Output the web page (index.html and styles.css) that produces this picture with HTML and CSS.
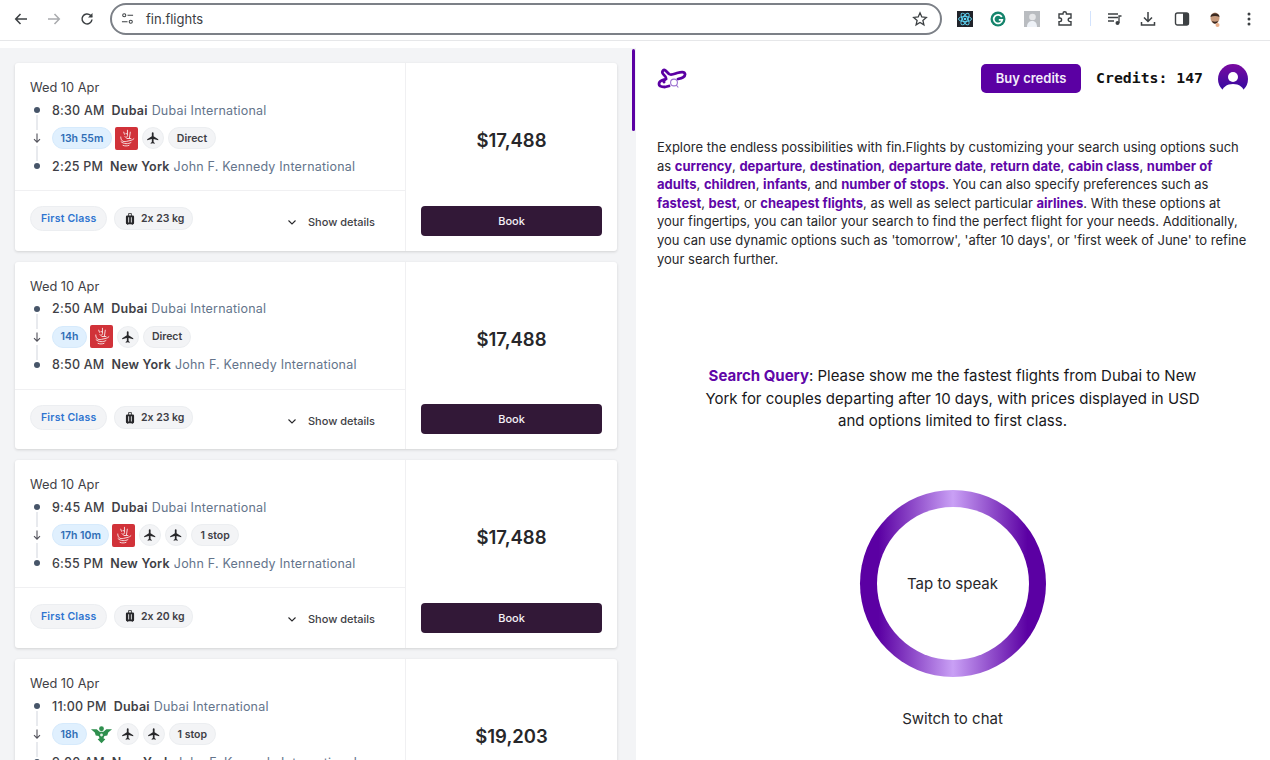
FILE: index.html
```html
<!DOCTYPE html>
<html lang="en">
<head>
  <meta charset="UTF-8">
  <title>fin.flights</title>
  <link rel="stylesheet" href="styles.css">
</head>
<body>
  <svg class="defs" width="0" height="0">
    <symbol id="plane" viewBox="0 0 24 24"><path d="M21 16v-2l-8-5V3.500c0-.83-.67-1.500-1.500-1.500S10 2.670 10 3.500V9l-8 5v2l8-2.500V19l-2 1.500V22l3.500-1 3.500 1v-1.500L13 19v-5.500l8 2.500z"/></symbol>
    <symbol id="bag" viewBox="0 0 24 24"><path d="M9 2h6v4h2a2 2 0 0 1 2 2v11a2 2 0 0 1-2 2v1h-2v-1H9v1H7v-1a2 2 0 0 1-2-2V8a2 2 0 0 1 2-2h2zm1.500 1.500V6h3V3.500zM9 9v9h1.500V9zm4.500 0v9H15V9z" fill-rule="evenodd"/></symbol>
    <symbol id="chevron" viewBox="0 0 12 12"><path d="M2.500 4.500 6 8l3.500-3.500" fill="none" stroke="currentColor" stroke-width="1.100"/></symbol>
    <symbol id="down" viewBox="0 0 12 12"><path d="M6 1.500v8.500M3 7.200 6 10.200l3-3" fill="none" stroke="currentColor" stroke-width="1.100"/></symbol>
    <symbol id="emirates" viewBox="0 0 24 24"><rect width="24" height="24" rx="2" fill="#d13239"/><path d="M13 3v6c0 2-2 2-3 1M16 5l-1 7M9 5l1 3M6 10c0 4 2 6 6 5s6-1 8-3M6 15c3 3 8 3 11 1M8 19c2 1 5 1 7 0M11 7h2M12 12h5" fill="none" stroke="#f6dfe0" stroke-width="1"/></symbol>
    <symbol id="falcon" viewBox="0 0 24 24"><path d="M1 6.500h6l3 2.500h4l3-2.500h6l-4 3.500 -1 3-3 .500-1 2.500 2 1-4 4-4-4 2-1-1-2.500-3-.500-1-3z" fill="#2f8f4e"/><circle cx="12" cy="6" r="2.500" fill="#2f8f4e"/><circle cx="12" cy="12.500" r="1.500" fill="#e3f2e7"/></symbol>
  </svg>

  <!-- Browser toolbar -->
  <header class="toolbar">
    <svg class="tool-icon first" viewBox="0 0 16 16"><path d="M14 8H3M7.500 3 2.700 8l4.800 5" fill="none" stroke="#3c4043" stroke-width="1.500"/></svg>
    <svg class="tool-icon faded" viewBox="0 0 16 16"><path d="M2 8h11M8.500 3l4.800 5-4.800 5" fill="none" stroke="#a9abae" stroke-width="1.500"/></svg>
    <svg class="tool-icon" viewBox="0 0 16 16"><path d="M13 8.500A5 5 0 1 1 11.500 4.300L13 5.800" fill="none" stroke="#3c4043" stroke-width="1.500"/><path d="M13.500 2v4.500H9z" fill="#3c4043"/></svg>
    <div class="address">
      <svg class="tune" viewBox="0 0 14 14"><circle cx="3.500" cy="3.500" r="1.700" fill="none" stroke="#3c4043" stroke-width="1.100"/><path d="M7 3.500h6M1 10.500h6" stroke="#3c4043" stroke-width="1.200"/><circle cx="10.500" cy="10.500" r="1.700" fill="none" stroke="#3c4043" stroke-width="1.100"/></svg>
      <span class="url">fin.flights</span>
      <svg class="star" viewBox="0 0 16 16"><path d="m8 1.800 1.800 4.200 4.500.4-3.400 3 1 4.400L8 11.500l-3.900 2.300 1-4.400-3.400-3 4.500-.4z" fill="none" stroke="#3c4043" stroke-width="1.300"/></svg>
    </div>
    <div class="extensions">
      <svg class="ext" viewBox="0 0 16 16"><rect width="16" height="16" fill="#20232a"/><g fill="none" stroke="#61dafb" stroke-width=".9"><ellipse cx="8" cy="8" rx="6.500" ry="2.600"/><ellipse cx="8" cy="8" rx="6.500" ry="2.600" transform="rotate(60 8 8)"/><ellipse cx="8" cy="8" rx="6.500" ry="2.600" transform="rotate(120 8 8)"/></g><circle cx="8" cy="8" r="1.300" fill="#61dafb"/></svg>
      <svg class="ext" viewBox="0 0 16 16"><circle cx="8" cy="8" r="7.500" fill="#15846c"/><path d="M11.800 6A4.300 4.300 0 1 0 12.300 8.800H8.800" fill="none" stroke="#fff" stroke-width="1.700"/></svg>
      <svg class="ext" viewBox="0 0 16 16"><rect width="16" height="16" fill="#b9bcc0"/><circle cx="8.500" cy="6" r="3.300" fill="#e6e7e9"/><path d="M3 16c0-5 3-6 5.500-6s4.500 2 4.500 6z" fill="#eef2f7"/></svg>
      <svg class="ext" viewBox="0 0 16 16"><path d="M6 3V2.500a1.700 1.700 0 0 1 3.400 0V3H14v4h-1a1.800 1.800 0 0 0 0 3.600h1V14H2v-3.400h.8a1.800 1.800 0 0 0 0-3.600H2V3z" fill="none" stroke="#3c4043" stroke-width="1.400"/></svg>
      <span class="tool-divider"></span>
      <svg class="ext" viewBox="0 0 16 16"><path d="M1 3h10M1 6.500h10M1 10h6" stroke="#3c4043" stroke-width="1.500"/><circle cx="10.500" cy="12" r="2" fill="#3c4043"/><path d="M12 12V5h2.500" fill="none" stroke="#3c4043" stroke-width="1.300"/></svg>
      <svg class="ext" viewBox="0 0 16 16"><path d="M8 1v9M4 6.500 8 10.500l4-4M1.500 11v3h13v-3" fill="none" stroke="#3c4043" stroke-width="1.500"/></svg>
      <svg class="ext" viewBox="0 0 16 16"><rect x="1.500" y="2" width="13" height="12" rx="2" fill="none" stroke="#3c4043" stroke-width="1.400"/><path d="M9 2h4a1.500 1.500 0 0 1 1.500 1.500v9A1.500 1.500 0 0 1 13 14H9z" fill="#3c4043"/></svg>
      <svg class="ext" viewBox="0 0 16 16"><ellipse cx="8" cy="7" rx="4.500" ry="5.500" fill="#c79a7c"/><path d="M3.500 6C3.500 1 12.500 1 12.500 6 10 4.500 6 4.500 3.500 6zM5 10c1 3.500 5 3.500 6 0-2 1-4 1-6 0z" fill="#3b2a22"/><circle cx="10.500" cy="14" r="2" fill="#eab08c"/></svg>
      <svg class="ext" viewBox="0 0 16 16"><circle cx="8" cy="3" r="1.500" fill="#3c4043"/><circle cx="8" cy="8" r="1.500" fill="#3c4043"/><circle cx="8" cy="13" r="1.500" fill="#3c4043"/></svg>
    </div>
  </header>

  <main class="app">
    <!-- Flight results -->
    <section class="results">
      <div class="results-list">

        <article class="card">
          <div class="card-main">
            <div class="trip">
              <p class="date">Wed 10 Apr</p>
              <div class="legs">
                <div class="rail"><i class="dot"></i><i class="line"></i><svg class="arrow"><use href="#down"/></svg><i class="line"></i><i class="dot"></i></div>
                <div class="stops">
                  <p class="stop"><span class="time">8:30 AM</span><b class="city">Dubai</b><span class="airport">Dubai International</span></p>
                  <div class="meta"><span class="pill duration">13h 55m</span><svg class="airline"><use href="#emirates"/></svg><span class="plane"><svg><use href="#plane"/></svg></span><span class="pill">Direct</span></div>
                  <p class="stop"><span class="time">2:25 PM</span><b class="city">New York</b><span class="airport">John F. Kennedy International</span></p>
                </div>
              </div>
            </div>
            <div class="extras">
              <span class="pill cabin">First Class</span>
              <span class="pill baggage"><svg><use href="#bag"/></svg>2x 23 kg</span>
              <a class="details"><svg><use href="#chevron"/></svg>Show details</a>
            </div>
          </div>
          <div class="card-side">
            <div class="price">$17,488</div>
            <button class="book">Book</button>
          </div>
        </article>

        <article class="card">
          <div class="card-main">
            <div class="trip">
              <p class="date">Wed 10 Apr</p>
              <div class="legs">
                <div class="rail"><i class="dot"></i><i class="line"></i><svg class="arrow"><use href="#down"/></svg><i class="line"></i><i class="dot"></i></div>
                <div class="stops">
                  <p class="stop"><span class="time">2:50 AM</span><b class="city">Dubai</b><span class="airport">Dubai International</span></p>
                  <div class="meta"><span class="pill duration">14h</span><svg class="airline"><use href="#emirates"/></svg><span class="plane"><svg><use href="#plane"/></svg></span><span class="pill">Direct</span></div>
                  <p class="stop"><span class="time">8:50 AM</span><b class="city">New York</b><span class="airport">John F. Kennedy International</span></p>
                </div>
              </div>
            </div>
            <div class="extras">
              <span class="pill cabin">First Class</span>
              <span class="pill baggage"><svg><use href="#bag"/></svg>2x 23 kg</span>
              <a class="details"><svg><use href="#chevron"/></svg>Show details</a>
            </div>
          </div>
          <div class="card-side">
            <div class="price">$17,488</div>
            <button class="book">Book</button>
          </div>
        </article>

        <article class="card">
          <div class="card-main">
            <div class="trip">
              <p class="date">Wed 10 Apr</p>
              <div class="legs">
                <div class="rail"><i class="dot"></i><i class="line"></i><svg class="arrow"><use href="#down"/></svg><i class="line"></i><i class="dot"></i></div>
                <div class="stops">
                  <p class="stop"><span class="time">9:45 AM</span><b class="city">Dubai</b><span class="airport">Dubai International</span></p>
                  <div class="meta"><span class="pill duration">17h 10m</span><svg class="airline"><use href="#emirates"/></svg><span class="plane"><svg><use href="#plane"/></svg></span><span class="plane"><svg><use href="#plane"/></svg></span><span class="pill">1 stop</span></div>
                  <p class="stop"><span class="time">6:55 PM</span><b class="city">New York</b><span class="airport">John F. Kennedy International</span></p>
                </div>
              </div>
            </div>
            <div class="extras">
              <span class="pill cabin">First Class</span>
              <span class="pill baggage"><svg><use href="#bag"/></svg>2x 20 kg</span>
              <a class="details"><svg><use href="#chevron"/></svg>Show details</a>
            </div>
          </div>
          <div class="card-side">
            <div class="price">$17,488</div>
            <button class="book">Book</button>
          </div>
        </article>

        <article class="card">
          <div class="card-main">
            <div class="trip">
              <p class="date">Wed 10 Apr</p>
              <div class="legs">
                <div class="rail"><i class="dot"></i><i class="line"></i><svg class="arrow"><use href="#down"/></svg><i class="line"></i><i class="dot"></i></div>
                <div class="stops">
                  <p class="stop"><span class="time">11:00 PM</span><b class="city">Dubai</b><span class="airport">Dubai International</span></p>
                  <div class="meta"><span class="pill duration">18h</span><svg class="airline"><use href="#falcon"/></svg><span class="plane"><svg><use href="#plane"/></svg></span><span class="plane"><svg><use href="#plane"/></svg></span><span class="pill">1 stop</span></div>
                  <p class="stop"><span class="time">9:00 AM</span><b class="city">New York</b><span class="airport">John F. Kennedy International</span></p>
                </div>
              </div>
            </div>
            <div class="extras">
              <span class="pill cabin">First Class</span>
              <span class="pill baggage"><svg><use href="#bag"/></svg>2x 23 kg</span>
              <a class="details"><svg><use href="#chevron"/></svg>Show details</a>
            </div>
          </div>
          <div class="card-side">
            <div class="price">$19,203</div>
            <button class="book">Book</button>
          </div>
        </article>

      </div>
      <div class="scroll-thumb"></div>
    </section>

    <!-- Voice search panel -->
    <section class="panel">
      <div class="panel-head">
        <svg class="logo" viewBox="0 0 30 22"><path d="M21 11c4-1 7.500-2 7-5-.5-2.500-4-2-8-1-3 1-6 2.500-8 1L8.500 2.500C6.500 1 5 3 5.500 5 6 7 9.500 8 9 10.500 8 12.500 6 12 7 14M9 11c-2 1-7 1-7 5 0 2.500 3.500 3 6 3l4-1" fill="none" stroke="#5b00a3" stroke-width="2.800" stroke-linecap="round" stroke-linejoin="round"/><circle cx="17" cy="14.500" r="3.400" fill="#fff" stroke="#9a6fd0" stroke-width="1.100"/><path d="m19.300 17 2 2.500" stroke="#9a6fd0" stroke-width="1.100"/></svg>
        <button class="buy">Buy credits</button>
        <span class="credits">Credits: 147</span>
        <svg class="avatar" viewBox="0 0 30 30"><defs><linearGradient id="av" x1="0" y1="0" x2="0" y2="1"><stop offset="0" stop-color="#7a0aa0"/><stop offset="1" stop-color="#2a0aa0"/></linearGradient></defs><circle cx="15" cy="15" r="15" fill="url(#av)"/><circle cx="15" cy="13" r="5" fill="#fff"/><path d="M3 30c1-7 6-10 12-10s11 3 12 10z" fill="#fff"/></svg>
      </div>

      <p class="intro">Explore the endless possibilities with fin.Flights by customizing your search using options such as <b>currency</b>, <b>departure</b>, <b>destination</b>, <b>departure date</b>, <b>return date</b>, <b>cabin class</b>, <b>number of adults</b>, <b>children</b>, <b>infants</b>, and <b>number of stops</b>. You can also specify preferences such as <b>fastest</b>, <b>best</b>, or <b>cheapest flights</b>, as well as select particular <b>airlines</b>. With these options at your fingertips, you can tailor your search to find the perfect flight for your needs. Additionally, you can use dynamic options such as 'tomorrow', 'after 10 days', or 'first week of June' to refine your search further.</p>

      <p class="query"><b>Search Query</b>: Please show me the fastest flights from Dubai to New York for couples departing after 10 days, with prices displayed in USD and options limited to first class.</p>

      <button class="ring"><span class="ring-inner">Tap to speak</span></button>
      <a class="switch">Switch to chat</a>
    </section>
  </main>
</body>
</html>
```

FILE: styles.css
```css
/* General Styles */
* {
  box-sizing: border-box;
}

html,
body {
  margin: 0;
  height: 760px;
  overflow: hidden;
}

body {
  font-family: "Inter", sans-serif;
  font-feature-settings: "calt" 0;
  background-color: #fff;
  color: #27272a;
}

p {
  margin: 0;
}

button {
  font-family: inherit;
  border: none;
  cursor: pointer;
}

.defs {
  position: absolute;
}

/* Browser toolbar */
.toolbar {
  display: flex;
  align-items: center;
  height: 41px;
  padding: 0 12px 3px 13px;
  border-bottom: 1px solid #e6e7e9;
}

.tool-icon {
  width: 16px;
  height: 16px;
  margin-right: 17px;
}

.tool-icon:nth-of-type(3) {
  margin-right: 15px;
}

.address {
  display: flex;
  align-items: center;
  width: 832px;
  height: 32px;
  padding: 0 12px 0 9px;
  border: 2px solid #7c8087;
  border-radius: 16px;
}

.tune {
  width: 13px;
  height: 13px;
}

.url {
  flex: 1;
  margin-left: 12px;
  font-size: 13px;
  color: #3c4043;
}

.star {
  width: 16px;
  height: 16px;
}

.extensions {
  display: flex;
  align-items: center;
  gap: 17.400px;
  margin-left: 15px;
}

.ext {
  width: 16px;
  height: 16px;
}

.tool-divider {
  width: 1px;
  height: 15px;
  margin: 0 -1px;
  background-color: #d3e3fd;
}

.app {
  display: flex;
  height: 719px;
}

/* Flight results */
.results {
  position: relative;
  width: 636px;
  padding-top: 7px;
  overflow: hidden;
}

.results-list {
  display: flex;
  flex-direction: column;
  gap: 11px;
  height: 100%;
  padding: 15px 19px 0 15px;
  background-color: #f3f4f6;
}

.scroll-thumb {
  position: absolute;
  top: 8px;
  right: 1px;
  width: 3px;
  height: 82px;
  background-color: #5b00a3;
  border-radius: 2px;
}

.card {
  display: flex;
  flex: none;
  height: 187.700px;
  background-color: #fff;
  border-radius: 3px;
  box-shadow: 0 1px 3px rgba(0, 0, 0, 0.14);
}

.card-main {
  display: flex;
  flex-direction: column;
  width: 391px;
  border-right: 1px solid #f0f0f2;
}

.trip {
  height: 128px;
  padding: 17px 15px 0;
  border-bottom: 1px solid #f0f0f2;
}

.date {
  font-size: 12.800px;
  line-height: 16px;
  color: #3f3f46;
}

.legs {
  display: flex;
  margin-top: 4px;
}

.rail {
  display: flex;
  flex-direction: column;
  align-items: center;
  gap: 2px;
  width: 14px;
  margin-right: 8px;
  padding: 7px 0;
}

.dot {
  flex: none;
  width: 6px;
  height: 6px;
  border-radius: 50%;
  background-color: #475569;
}

.line {
  flex: 1;
  width: 2px;
  background-color: #e8eaee;
}

.arrow {
  flex: none;
  width: 12px;
  height: 12px;
  color: #52525b;
}

.stops {
  display: flex;
  flex-direction: column;
  gap: 8px;
}

.stop {
  display: flex;
  gap: 7px;
  height: 20px;
  align-items: center;
  font-size: 12.500px;
  letter-spacing: 0.2px;
  white-space: nowrap;
}

.time {
  font-weight: 500;
  color: #3f3f46;
}

.city {
  font-weight: 600;
  color: #3f3f46;
  margin-right: -3px;
}

.airport {
  color: #64748b;
}

.meta {
  display: flex;
  align-items: center;
  gap: 4px;
  height: 22px;
  margin: -1px 0;
}

.pill {
  display: inline-flex;
  align-items: center;
  height: 22px;
  padding: 0 8px;
  border: 1px solid #eceef1;
  border-radius: 11px;
  background-color: #f3f4f6;
  font-size: 10.500px;
  font-weight: 600;
  color: #3f3f46;
}

.duration {
  padding: 0 7.500px;
  background-color: #e0f0fe;
  border-color: #d6eafc;
  color: #2f6db5;
}

.airline {
  width: 23px;
  height: 23px;
  margin-left: -1px;
}

.plane {
  display: flex;
  align-items: center;
  justify-content: center;
  width: 22px;
  height: 22px;
  border: 1px solid #eceef1;
  border-radius: 50%;
  background-color: #f3f4f6;
}

.plane svg {
  width: 14px;
  height: 14px;
  fill: #27272a;
}

.extras {
  display: flex;
  align-items: center;
  gap: 7px;
  flex: 1;
  padding: 0 15px 4px;
}

.cabin {
  height: 25px;
  padding: 0 10px;
  border-radius: 13px;
  letter-spacing: 0.2px;
  color: #2f74d0;
}

.baggage {
  gap: 4px;
  height: 23px;
  padding: 0 7.500px;
  color: #3f3f46;
}

.baggage svg {
  width: 14px;
  height: 14px;
  fill: #27272a;
}

.details {
  display: flex;
  align-items: center;
  gap: 10px;
  margin: 6px 15px 0 auto;
  font-size: 11px;
  font-weight: 500;
  color: #3f3f46;
}

.details svg {
  width: 12px;
  height: 12px;
  color: #27272a;
}

.card-side {
  display: flex;
  flex-direction: column;
  flex: 1;
  padding: 0 15px 15px;
}

.price {
  flex: 1;
  display: flex;
  align-items: center;
  justify-content: center;
  padding-top: 11px;
  font-size: 18.500px;
  font-weight: 600;
  color: #27272a;
}

.book {
  height: 30px;
  border-radius: 4px;
  background-color: #321837;
  color: #f4f0f5;
  font-size: 11px;
  font-weight: 500;
}

/* Voice search panel */
.panel {
  display: flex;
  flex-direction: column;
  flex: 1;
  padding: 23px 22px 0 21px;
  align-items: center;
}

.panel-head {
  display: flex;
  align-items: center;
  align-self: stretch;
  height: 29px;
}

.logo {
  width: 30px;
  height: 22px;
  margin-right: auto;
}

.buy {
  width: 100px;
  height: 29px;
  padding-bottom: 2px;
  border-radius: 5px;
  background-color: #5b00a3;
  color: #f3ecfa;
  font-size: 13px;
  font-weight: 600;
}

.credits {
  margin: -2px 15px 0;
  font-family: "DejaVu Sans Mono", monospace;
  font-size: 14.800px;
  font-weight: 700;
  color: #111;
}

.avatar {
  width: 30px;
  height: 30px;
}

.intro {
  align-self: stretch;
  margin-top: 45px;
  font-size: 13px;
  line-height: 18.600px;
  color: #27272a;
}

.intro b,
.query b {
  color: #5f06a8;
  font-weight: 700;
}

.query {
  width: 510px;
  margin-top: 97px;
  font-size: 15px;
  line-height: 22.500px;
  text-align: center;
  color: #18181b;
}

.ring {
  display: flex;
  align-items: center;
  justify-content: center;
  width: 186px;
  height: 187px;
  margin-top: 57px;
  padding: 17px;
  border-radius: 50%;
  background: linear-gradient(90deg, #5b00a3 10%, #c9a0f5 50%, #5b00a3 90%);
}

.ring-inner {
  display: flex;
  align-items: center;
  justify-content: center;
  width: 100%;
  height: 100%;
  border-radius: 50%;
  background-color: #fff;
  font-size: 15px;
  color: #27272a;
}

.switch {
  margin-top: 32px;
  font-size: 15px;
  color: #27272a;
}
```
